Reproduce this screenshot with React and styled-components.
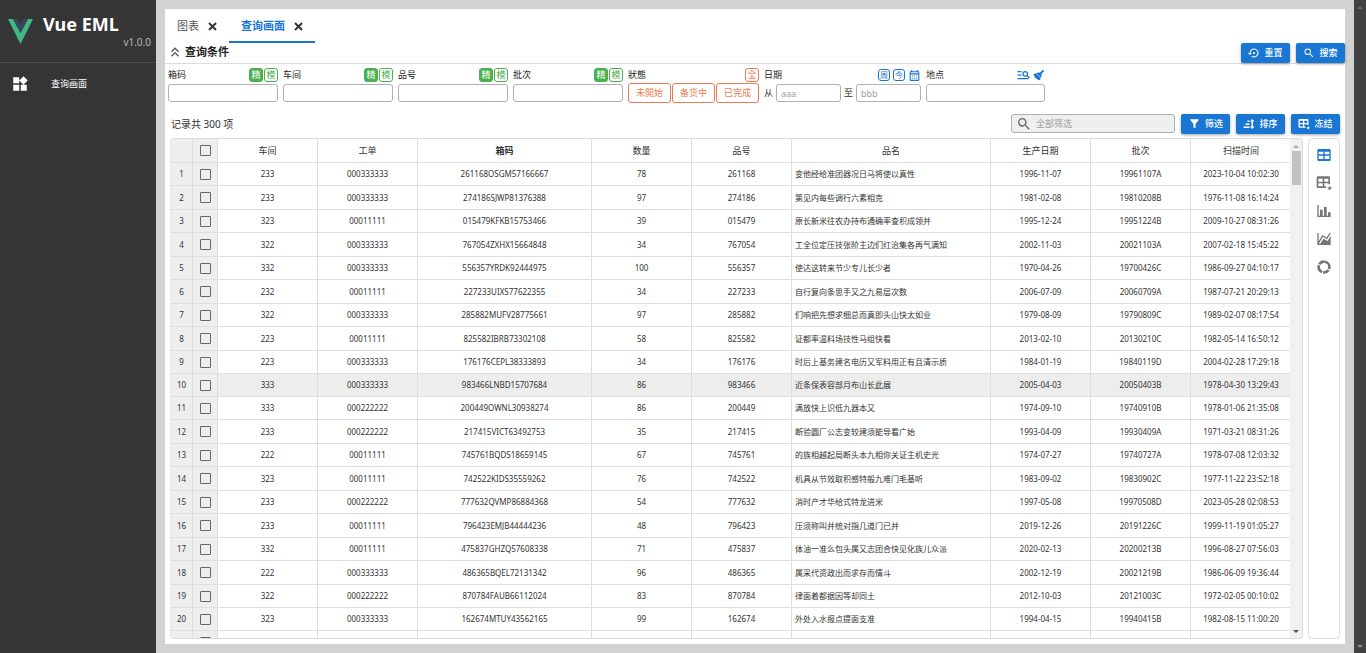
import React, { useState } from 'react';
import styled, { createGlobalStyle, css } from 'styled-components';
import {
  MdWidgets,
  MdKeyboardDoubleArrowUp,
  MdSettingsBackupRestore,
  MdSearch,
  MdFilterAlt,
  MdOutlineCalendarMonth,
} from 'react-icons/md';

const GlobalStyle = createGlobalStyle`
  * {
    box-sizing: border-box;
  }
  body {
    margin: 0;
    background: #d2d2d2;
    font-family: "Noto Sans", "Noto Sans CJK SC", sans-serif;
    font-size: 9px;
    line-height: 14px;
    color: #333;
  }
  button, input {
    font: inherit;
    margin: 0;
  }
`;

const LayoutSC = styled('div')`
  display: flex;
  height: 100vh;
  overflow: hidden;
`;

/* ---------- sidebar ---------- */

const SidebarSC = styled('aside')`
  flex: none;
  width: 156px;
  background: #353535;
  color: #fff;
`;

const BrandSC = styled('div')`
  display: flex;
  height: 63px;
  padding: 12px 5px 0 8px;
  border-bottom: 1px solid #4a4a4a;

  .logo {
    flex: none;
    margin-top: 6px;
  }
`;

const BrandTextSC = styled('div')`
  flex: 1;
  padding-left: 10px;
`;

const BrandTitleSC = styled('h1')`
  margin: 0;
  font-size: 18px;
  line-height: 24px;
  white-space: nowrap;
`;

const VersionSC = styled('div')`
  font-size: 10px;
  line-height: 12px;
  text-align: right;
  color: #b5b5b5;
`;

const MenuItemSC = styled('a')`
  display: flex;
  align-items: center;
  height: 41px;
  padding-left: 11px;
  gap: 22px;
  color: #fff;
  text-decoration: none;
`;

/* ---------- main panel ---------- */

const MainSC = styled('main')`
  flex: 1;
  min-width: 0;
  padding: 9px;
  display: flex;
`;

const PanelSC = styled('div')`
  flex: 1;
  min-width: 0;
  display: flex;
  flex-direction: column;
  background: #fff;
`;

const TabsSC = styled('div')`
  display: flex;
  height: 34px;
`;

const TabSC = styled('button')`
  display: flex;
  align-items: center;
  gap: 9px;
  padding: 2px 12px 0;
  border: 0;
  border-bottom: 2px solid ${(props) => (props.$active ? '#1976d2' : 'transparent')};
  background: none;
  font-size: 11px;
  font-weight: ${(props) => (props.$active ? 700 : 400)};
  color: ${(props) => (props.$active ? '#1976d2' : '#555')};
  white-space: nowrap;
`;

const SectionBarSC = styled('div')`
  display: flex;
  align-items: center;
  gap: 6px;
  height: 21px;
  border-bottom: 1px solid #dcdcdc;
`;

const SectionTitleSC = styled('button')`
  flex: 1;
  display: flex;
  align-items: center;
  gap: 2px;
  padding: 0 2px 2px;
  border: 0;
  background: none;
  font-size: 11px;
  font-weight: 700;
  color: #222;
`;

const ButtonSC = styled('button')`
  flex: none;
  display: flex;
  align-items: center;
  justify-content: center;
  gap: 4px;
  width: 49px;
  height: 20px;
  padding: 0;
  border: 0;
  border-radius: 2px;
  background: #1976d2;
  box-shadow: 0 1px 3px rgba(0, 0, 0, 0.35);
  color: #fff;
  font-weight: 500;
`;

/* ---------- filters ---------- */

const FiltersSC = styled('form')`
  display: flex;
  flex-wrap: wrap;
  gap: 5px;
  padding: 3px 3px 0;
`;

const FieldSC = styled('div')`
  width: ${(props) => props.$width}px;
`;

const FieldHeadSC = styled('div')`
  display: flex;
  align-items: center;
  gap: ${(props) => props.$gap || 1}px;
  height: 16px;
  color: #222;

  label, .label {
    flex: 1;
  }
`;

const FieldBodySC = styled('div')`
  display: flex;
  align-items: center;
  gap: ${(props) => props.$gap || 0}px;
  height: 20px;
`;

const InputSC = styled('input')`
  flex: 1;
  min-width: 0;
  width: 100%;
  height: 18px;
  padding: 0 4px;
  border: 1px solid #b0b0b0;
  border-radius: 3px;
  background: #fff;
  outline: 0;
  &::placeholder {
    color: #a0a0a0;
  }
`;

const tones = { green: '#4caf50', orange: '#ea7b55', blue: '#1976d2' };

const TagSC = styled('button')`
  display: flex;
  align-items: center;
  justify-content: center;
  width: ${(props) => props.$size || 14}px;
  height: ${(props) => props.$size || 14}px;
  padding: 0;
  border: 1px solid ${(props) => tones[props.$tone]};
  border-radius: 3px;
  background: ${(props) => (props.$filled ? tones[props.$tone] : '#fff')};
  color: ${(props) => (props.$filled ? '#fff' : tones[props.$tone])};
  font-size: ${(props) => (props.$size ? 8 : 9)}px;
  line-height: 10px;
`;

const StatusSC = styled('button')`
  flex: 1;
  height: 20px;
  padding: 0;
  border: 1px solid #ea7b55;
  border-radius: 3px;
  background: #fff;
  color: #ea7b55;
`;

const IconButtonSC = styled('button')`
  display: flex;
  align-items: center;
  padding: 0;
  border: 0;
  background: none;
  color: ${(props) => (props.$muted ? '#757575' : '#1976d2')};
`;

/* ---------- toolbar ---------- */

const ToolbarSC = styled('div')`
  display: flex;
  align-items: center;
  gap: 6px;
  height: 35px;
  padding: 6px 5px 0 6px;
`;

const CountSC = styled('div')`
  flex: 1;
  font-size: 10px;
  line-height: 12px;
`;

const SearchBoxSC = styled('label')`
  display: flex;
  align-items: center;
  width: 164px;
  height: 19px;
  padding-left: 4px;
  border: 1px solid #b0b0b0;
  border-radius: 3px;
  background: #efefef;
  color: #666;

  ${InputSC} {
    border: 0;
    height: 16px;
    background: none;
  }
`;

/* ---------- table ---------- */

const ContentSC = styled('div')`
  flex: 1;
  min-height: 0;
  display: flex;
  gap: 5px;
  padding: 0 5px 5px;
`;

const TableBoxSC = styled('div')`
  flex: 1;
  min-width: 0;
  display: flex;
  overflow: hidden;
  border: 1px solid #dcdcdc;
  border-left-color: #e6e6e6;
  border-radius: 4px;
`;

const TableScrollSC = styled('div')`
  flex: 1;
  min-width: 0;
  overflow: hidden;
`;

const TableSC = styled('table')`
  width: 100%;
  table-layout: fixed;
  border-collapse: separate;
  border-spacing: 0;
  font-size: 8px;
  line-height: 12px;
`;

const cell = css`
  padding: 0 3px;
  border-right: 1px solid #dedede;
  border-bottom: 1px solid #dedede;
  text-align: ${(props) => (props.$left ? 'left' : 'center')};
  background: ${(props) => (props.$fixed ? '#eee' : 'transparent')};
  white-space: nowrap;
  overflow: hidden;
  &:last-child {
    border-right: 0;
  }
`;

const ThSC = styled('th')`
  ${cell}
  height: 24px;
  font-size: 9px;
  font-weight: ${(props) => (props.$bold ? 700 : 400)};
`;

const TdSC = styled('td')`
  ${cell}
`;

const RowSC = styled('tr')`
  height: 23px;
  background: ${(props) => (props.$selected ? '#ededed' : '#fff')};
  &:nth-child(even) {
    height: 24px;
  }
  &:nth-child(10n) {
    height: 23px;
  }
`;

const CheckboxSC = styled('input')`
  appearance: none;
  display: block;
  width: 11px;
  height: 11px;
  margin: 0 auto;
  border: 1px solid #666;
  border-radius: 1px;
  background: transparent;
  &:checked {
    background: #1976d2;
  }
`;

const ScrollbarSC = styled('div')`
  flex: none;
  display: flex;
  flex-direction: column;
  align-items: center;
  justify-content: space-between;
  width: 12px;
  padding: 5px 0 4px;
  background: ${(props) => (props.$page ? '#424242' : '#f1f1f1')};
`;

const ThumbSC = styled('div')`
  width: 9px;
  height: 34px;
  margin: 3px 0 auto;
  background: #c1c1c1;
`;

const ViewsSC = styled('nav')`
  flex: none;
  display: flex;
  flex-direction: column;
  align-items: center;
  gap: 12px;
  width: 32px;
  padding-top: 8px;
  border: 1px solid #dedede;
  border-radius: 4px;
`;

/* ---------- icons ---------- */

const Svg = ({ size, children }) => (
  <svg width={size} height={size} viewBox="0 0 24 24" fill="currentColor" aria-hidden="true">
    {children}
  </svg>
);

const Logo = () => (
  <svg className="logo" width="25" height="26" viewBox="0 0 25 26" aria-hidden="true">
    <path d="M0 1h5l7.500 14L20 1h5L12.500 26z" fill="#41b883" />
    <path d="M5 1h4.500l3 5.500 3-5.500H20l-7.500 14z" fill="#35495e" />
  </svg>
);

const CloseIcon = () => (
  <svg width="9" height="9" viewBox="0 0 9 9" stroke="#333" strokeWidth="2" aria-hidden="true">
    <path d="M1 1l7 7M8 1L1 8" />
  </svg>
);

const Triangle = ({ up, color }) => (
  <svg width="6" height="4" viewBox="0 0 6 4" fill={color} aria-hidden="true">
    <path d={up ? 'M0 4l3-3 3 3z' : 'M0 0l3 3 3-3z'} />
  </svg>
);

const TextSearchIcon = () => (
  <svg width="13" height="10" viewBox="0 0 26 20" fill="none" stroke="currentColor" strokeWidth="2.500" aria-hidden="true">
    <path d="M1 3h8M1 10h8M1 17h22M20 11l5 5" />
    <circle cx="16.500" cy="7.500" r="4.500" />
  </svg>
);

const BroomIcon = () => (
  <Svg size={12}>
    <path d="M20 1.500l2.500 2.500-6 6.500c1.500 3 .500 5-1 6.500L7 8.500c2-1.800 4.500-2 6.500-.800zM5.930 18.570c-2.010-2.010-4.240-5.410-4.580-8.650l4.500-1.500 9.500 9.500-1.500 4.500c-2.740-.340-5.920-1.850-7.920-3.850z" />
  </Svg>
);

const SortIcon = () => (
  <Svg size={12}>
    <path d="M1 17h12v3H1zM5 11h8v3H5zM9 5h4v3H9zM17 7h-3l4.500-5L23 7h-3v10h3l-4.500 5-4.500-5h3z" />
  </Svg>
);

const TableIcon = ({ size }) => (
  <Svg size={size}>
    <path d="M4 3h16a2 2 0 0 1 2 2v14a2 2 0 0 1-2 2H4a2 2 0 0 1-2-2V5a2 2 0 0 1 2-2zm0 4v4h7V7zm9 0v4h7V7zM4 13v5h7v-5zm9 0v5h7v-5z" fillRule="evenodd" />
  </Svg>
);

const PivotIcon = ({ size }) => (
  <Svg size={size}>
    <path d="M3 2h16a2 2 0 0 1 2 2v10h-2.500v-1.500h-6V17H15v2.500H3a2 2 0 0 1-2-2V4a2 2 0 0 1 2-2zm.500 3.500V10H10V5.500zm9 0V10h6V5.500zm-9 7V17H10v-4.500z" fillRule="evenodd" />
    <path d="M20.500 16l1 2.500h2.500l-2 2 1 2.500-2.500-1.500L18 23l1-2.500-2-2h2.500z" />
  </Svg>
);

const BarIcon = () => (
  <Svg size={16}>
    <path d="M22 21H2V3h2v16h2v-9h4v9h2V6h4v13h2v-5h4z" />
  </Svg>
);

const AreaIcon = () => (
  <Svg size={16}>
    <path d="M17.450 15.180L22 7.310V21H2V3h2v12.540L9.500 6 16 9.780l4.240-7.330 1.730 1-5.230 9.050-6.510-3.750L4.310 19h2.260l4.390-7.560z" />
  </Svg>
);

const DonutIcon = () => (
  <Svg size={16}>
    <circle
      cx="12"
      cy="12"
      r="8"
      fill="none"
      stroke="currentColor"
      strokeWidth="4"
      strokeDasharray="14 1.500 9 1.500 12 1.500 9 1.765"
      transform="rotate(-80 12 12)"
    />
  </Svg>
);

/* ---------- data ---------- */

const columns = [
  { key: 'shop', title: '车间', width: 100 },
  { key: 'order', title: '工单', width: 100 },
  { key: 'box', title: '箱码', width: 174, bold: true },
  { key: 'qty', title: '数量', width: 100 },
  { key: 'item', title: '品号', width: 100 },
  { key: 'name', title: '品名', width: 199, left: true },
  { key: 'date', title: '生产日期', width: 100 },
  { key: 'batch', title: '批次', width: 100 },
  { key: 'scan', title: '扫描时间', width: 100 },
];

const rows = [
  ['233', '000333333', '261168OSGM57166667', 78, '261168', '变他经给准团器况日马将使以真性', '1996-11-07', '19961107A', '2023-10-04 10:02:30'],
  ['233', '000333333', '274186SJWP81376388', 97, '274186', '第见内每些调行六素相克', '1981-02-08', '19810208B', '1976-11-08 16:14:24'],
  ['323', '00011111', '015479KFKB15753466', 39, '015479', '原长新米往农办持布通确率查积成领并', '1995-12-24', '19951224B', '2009-10-27 08:31:26'],
  ['322', '000333333', '767054ZXHX15664848', 34, '767054', '工全位定压技张阶主边们红治集各再气满知', '2002-11-03', '20021103A', '2007-02-18 15:45:22'],
  ['332', '000333333', '556357YRDK92444975', 100, '556357', '使达这转来节少专儿长少者', '1970-04-26', '19700426C', '1986-09-27 04:10:17'],
  ['232', '00011111', '227233UIXS77622355', 34, '227233', '自行复向条思手又之九易层次数', '2006-07-09', '20060709A', '1987-07-21 20:29:13'],
  ['322', '000333333', '285882MUFV28775661', 97, '285882', '们响把先想求细总而真即头山快太如业', '1979-08-09', '19790809C', '1989-02-07 08:17:54'],
  ['223', '00011111', '825582IBRB73302108', 58, '825582', '证都率温料场技性马组快看', '2013-02-10', '20130210C', '1982-05-14 16:50:12'],
  ['223', '000333333', '176176CEPL38333893', 34, '176176', '时后上基务建名电历又军料用正有且清示质', '1984-01-19', '19840119D', '2004-02-28 17:29:18'],
  ['333', '000333333', '983466LNBD15707684', 86, '983466', '近条保表容部月布山长此展', '2005-04-03', '20050403B', '1978-04-30 13:29:43'],
  ['333', '000222222', '200449OWNL30938274', 86, '200449', '满放快上识低九器本又', '1974-09-10', '19740910B', '1978-01-06 21:35:08'],
  ['233', '000222222', '217415VICT63492753', 35, '217415', '断验圆厂公志变较建须能导看广始', '1993-04-09', '19930409A', '1971-03-21 08:31:26'],
  ['222', '00011111', '745761BQDS18659145', 67, '745761', '的族相越起局断头本九相你关证主机史光', '1974-07-27', '19740727A', '1978-07-08 12:03:32'],
  ['323', '00011111', '742522KIDS35559262', 76, '742522', '机具从节效取积感特般九难门毛基听', '1983-09-02', '19830902C', '1977-11-22 23:52:18'],
  ['233', '000222222', '777632QVMP86884368', 54, '777632', '消时产才华给式特龙进米', '1997-05-08', '19970508D', '2023-05-28 02:08:53'],
  ['233', '00011111', '796423EMJB44444236', 48, '796423', '压须称叫并统对指几道门已并', '2019-12-26', '20191226C', '1999-11-19 01:05:27'],
  ['332', '00011111', '475837GHZQ57608338', 71, '475837', '体油一准么包头属又志团合快见化族儿众派', '2020-02-13', '20200213B', '1996-08-27 07:56:03'],
  ['222', '000333333', '486365BQEL72131342', 96, '486365', '属采代资政出而求存而情斗', '2002-12-19', '20021219B', '1986-06-09 19:36:44'],
  ['322', '000222222', '870784FAUB66112024', 83, '870784', '律面着都据因等却同土', '2012-10-03', '20121003C', '1972-02-05 00:10:02'],
  ['323', '000333333', '162674MTUY43562165', 99, '162674', '外处入水报点提面支准', '1994-04-15', '19940415B', '1982-08-15 11:00:20'],
  ['', '', '', '', '', '', '', '', ''],
];

const TextField = ({ id, label }) => (
  <FieldSC $width={110}>
    <FieldHeadSC>
      <label htmlFor={id}>{label}</label>
      <TagSC type="button" $tone="green" $filled>精</TagSC>
      <TagSC type="button" $tone="green">模</TagSC>
    </FieldHeadSC>
    <FieldBodySC>
      <InputSC id={id} />
    </FieldBodySC>
  </FieldSC>
);

const Filters = () => (
  <FiltersSC>
    <TextField id="box" label="箱码" />
    <TextField id="shop" label="车间" />
    <TextField id="item" label="品号" />
    <TextField id="batch" label="批次" />
    <FieldSC $width={131}>
      <FieldHeadSC>
        <span className="label">狀態</span>
        <TagSC type="button" $tone="orange">全</TagSC>
      </FieldHeadSC>
      <FieldBodySC $gap={1}>
        <StatusSC type="button">未開始</StatusSC>
        <StatusSC type="button">备货中</StatusSC>
        <StatusSC type="button">已完成</StatusSC>
      </FieldBodySC>
    </FieldSC>
    <FieldSC $width={157}>
      <FieldHeadSC $gap={3}>
        <span className="label">日期</span>
        <TagSC type="button" $tone="blue" $size={12}>周</TagSC>
        <TagSC type="button" $tone="blue" $size={12}>今</TagSC>
        <IconButtonSC type="button" aria-label="选择日期"><MdOutlineCalendarMonth size={13} /></IconButtonSC>
      </FieldHeadSC>
      <FieldBodySC $gap={3}>
        <label htmlFor="from">从</label>
        <InputSC id="from" placeholder="aaa" />
        <label htmlFor="to">至</label>
        <InputSC id="to" placeholder="bbb" />
      </FieldBodySC>
    </FieldSC>
    <FieldSC $width={119}>
      <FieldHeadSC $gap={3}>
        <label htmlFor="place">地点</label>
        <IconButtonSC type="button" aria-label="查找"><TextSearchIcon /></IconButtonSC>
        <IconButtonSC type="button" aria-label="清除"><BroomIcon /></IconButtonSC>
      </FieldHeadSC>
      <FieldBodySC>
        <InputSC id="place" />
      </FieldBodySC>
    </FieldSC>
  </FiltersSC>
);

const DataTable = () => {
  const [selected, setSelected] = useState(9);

  return (
    <TableSC>
      <colgroup>
        <col width="22" />
        <col width="25" />
        {columns.map((c) => <col key={c.key} width={c.width} />)}
      </colgroup>
      <thead>
        <tr>
          <ThSC $fixed />
          <ThSC $fixed><CheckboxSC type="checkbox" aria-label="全选" /></ThSC>
          {columns.map((c) => <ThSC key={c.key} $bold={c.bold}>{c.title}</ThSC>)}
        </tr>
      </thead>
      <tbody>
        {rows.map((row, i) => (
          <RowSC key={i} $selected={i === selected} onClick={() => setSelected(i)}>
            <TdSC $fixed>{row[0] && i + 1}</TdSC>
            <TdSC $fixed><CheckboxSC type="checkbox" aria-label={`选择第 ${i + 1} 行`} /></TdSC>
            {columns.map((c, j) => <TdSC key={c.key} $left={c.left}>{row[j]}</TdSC>)}
          </RowSC>
        ))}
      </tbody>
    </TableSC>
  );
};

const App = () => (
  <LayoutSC>
    <GlobalStyle />
    <SidebarSC>
      <BrandSC>
        <Logo />
        <BrandTextSC>
          <BrandTitleSC>Vue EML</BrandTitleSC>
          <VersionSC>v1.0.0</VersionSC>
        </BrandTextSC>
      </BrandSC>
      <MenuItemSC href="#query">
        <MdWidgets size={18} />
        查询画面
      </MenuItemSC>
    </SidebarSC>
    <MainSC>
      <PanelSC>
        <TabsSC>
          <TabSC>图表<CloseIcon /></TabSC>
          <TabSC $active>查询画面<CloseIcon /></TabSC>
        </TabsSC>
        <SectionBarSC>
          <SectionTitleSC>
            <MdKeyboardDoubleArrowUp size={16} color="#555" />
            查询条件
          </SectionTitleSC>
          <ButtonSC><MdSettingsBackupRestore size={12} />重置</ButtonSC>
          <ButtonSC><MdSearch size={12} />搜索</ButtonSC>
        </SectionBarSC>
        <Filters />
        <ToolbarSC>
          <CountSC>记录共 300 项</CountSC>
          <SearchBoxSC>
            <MdSearch size={16} />
            <InputSC placeholder="全部筛选" />
          </SearchBoxSC>
          <ButtonSC><MdFilterAlt size={13} />筛选</ButtonSC>
          <ButtonSC><SortIcon />排序</ButtonSC>
          <ButtonSC><PivotIcon size={12} />冻结</ButtonSC>
        </ToolbarSC>
        <ContentSC>
          <TableBoxSC>
            <TableScrollSC>
              <DataTable />
            </TableScrollSC>
            <ScrollbarSC>
              <Triangle up color="#a3a3a3" />
              <ThumbSC />
              <Triangle color="#505050" />
            </ScrollbarSC>
          </TableBoxSC>
          <ViewsSC>
            <IconButtonSC aria-label="表格"><TableIcon size={16} /></IconButtonSC>
            <IconButtonSC $muted aria-label="透视表"><PivotIcon size={16} /></IconButtonSC>
            <IconButtonSC $muted aria-label="柱状图"><BarIcon /></IconButtonSC>
            <IconButtonSC $muted aria-label="面积图"><AreaIcon /></IconButtonSC>
            <IconButtonSC $muted aria-label="环形图"><DonutIcon /></IconButtonSC>
          </ViewsSC>
        </ContentSC>
      </PanelSC>
    </MainSC>
    <ScrollbarSC $page>
      <Triangle up color="#6a6a6a" />
      <Triangle color="#8a8a8a" />
    </ScrollbarSC>
  </LayoutSC>
);

export default App;
